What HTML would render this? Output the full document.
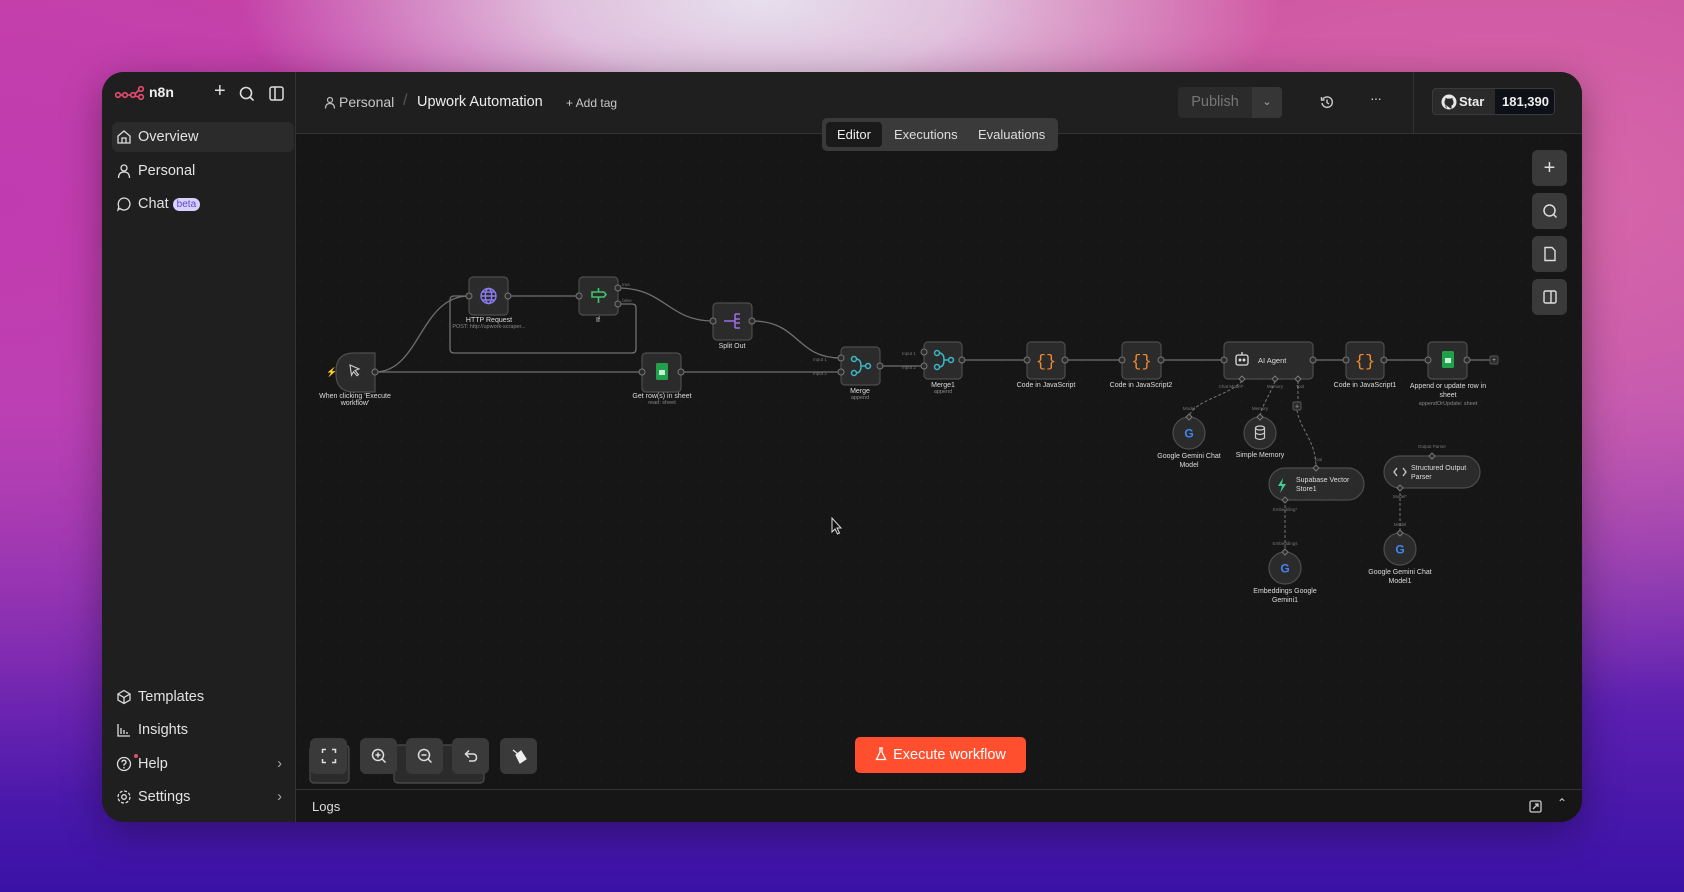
<!DOCTYPE html>
<html><head><meta charset="utf-8"><style>
*{box-sizing:border-box;margin:0;padding:0}
body{width:1684px;height:892px;overflow:hidden;font-family:"Liberation Sans",sans-serif;position:relative;
background:
radial-gradient(ellipse 520px 200px at 760px 0px,#e6e0ee 0%,rgba(230,220,235,.8) 40%,rgba(220,150,200,0) 100%),
radial-gradient(ellipse 900px 500px at 1500px 200px,#d868a8 0%,rgba(216,104,168,0) 100%),
radial-gradient(ellipse 700px 600px at 0px 200px,#c13bb0 0%,rgba(193,59,176,0) 100%),
linear-gradient(180deg,#c9489f 0%,#b24ab8 45%,#5a1fb0 80%,#3a12a6 100%);}
.win{position:absolute;left:102px;top:72px;width:1480px;height:750px;border-radius:22px;overflow:hidden;background:#161616;box-shadow:0 10px 40px rgba(0,0,0,.35)}
.abs{position:absolute}
.side{left:0;top:0;width:194px;height:750px;background:#1f1f1f;border-right:1px solid #333}
.hdr{left:194px;top:0;width:1286px;height:62px;background:#1f1f1f;border-bottom:1px solid #333}
.item{position:absolute;left:10px;height:30px;width:182px;border-radius:6px;color:#e2e2e2;font-size:14.5px;line-height:30px;padding-left:26px}
.item svg{position:absolute;left:4px;top:7px}
.t{position:absolute;color:#ddd;font-size:7px;text-align:center;white-space:nowrap;transform:translateX(-50%)}
.s{color:#888;font-size:5.5px}
.rb{position:absolute;left:1430px;width:35px;height:36px;border-radius:6px;background:#3a3a3a;display:flex;align-items:center;justify-content:center}
.cb{position:absolute;top:666px;width:37px;height:36px;border-radius:6px;background:#3a3a3a;display:flex;align-items:center;justify-content:center}
</style></head><body>
<div class="win">
<svg class="abs" style="left:-102px;top:-72px" width="1684" height="892">
<defs><pattern id="dots" width="20" height="20" patternUnits="userSpaceOnUse"><circle cx="1" cy="1" r=".6" fill="#242424"/></pattern></defs>
<rect x="296" y="134" width="1290" height="660" fill="url(#dots)"/>
<g fill="none" stroke="#707070" stroke-width="1.3">
<path d="M375,372 C420,372 420,296 469,296"/>
<path d="M375,372 H642"/>
<path d="M508,296 H579"/>
<path d="M618,288 C665,288 668,321 713,321"/>
<path d="M618,304 H632 Q636,304 636,308 V349 Q636,353 632,353 H454 Q450,353 450,349 V300 Q450,296 454,296 H469"/>
<path d="M752,321 C800,321 795,358 841,358"/>
<path d="M681,372 H841"/>
<path d="M880,366 H924"/>
<path d="M962,360 H1027 M1065,360 H1122 M1161,360 H1224 M1313,360 H1346 M1384,360 H1428 M1467,360 H1492"/>
</g>
<g fill="none" stroke="#777" stroke-width="1" stroke-dasharray="3,2">
<path d="M1242,381 C1230,395 1195,400 1189,416"/>
<path d="M1275,381 C1270,395 1262,405 1260,416"/>
<path d="M1298,381 V402 M1297,410 C1300,430 1316,440 1316,468"/>
<path d="M1285,500 V551"/>
<path d="M1400,488 V532"/>
</g>
<g fill="#2b2b2b" stroke="#4d4d4d" stroke-width="1.2">
<path d="M354,353 H375 V392 H354 Q336,392 336,374 V371 Q336,353 354,353Z"/>
<rect x="469" y="277" width="39" height="38" rx="4"/>
<rect x="579" y="277" width="39" height="38" rx="4"/>
<rect x="713" y="303" width="39" height="37" rx="4"/>
<rect x="642" y="353" width="39" height="39" rx="4"/>
<rect x="841" y="347" width="39" height="38" rx="4"/>
<rect x="924" y="342" width="38" height="37" rx="4"/>
<rect x="1027" y="342" width="38" height="37" rx="4"/>
<rect x="1122" y="342" width="39" height="37" rx="4"/>
<rect x="1224" y="342" width="89" height="37" rx="4"/>
<rect x="1346" y="342" width="38" height="37" rx="4"/>
<rect x="1428" y="342" width="39" height="37" rx="4"/>
<circle cx="1189" cy="433" r="16"/>
<circle cx="1260" cy="433" r="16"/>
<circle cx="1285" cy="568" r="16"/>
<circle cx="1400" cy="549" r="16"/>
<rect x="1269" y="468" width="95" height="32" rx="16"/>
<rect x="1384" y="456" width="96" height="32" rx="16"/>
<rect x="1293" y="402" width="8" height="8" rx="1.5"/>
<rect x="1490" y="356" width="8" height="8" rx="1.5"/>
<rect x="310" y="745" width="39" height="38" rx="4"/>
<rect x="394" y="745" width="90" height="38" rx="4"/>
</g>
<g fill="#2b2b2b" stroke="#777" stroke-width="1">
<circle cx="375" cy="372" r="3"/><circle cx="469" cy="296" r="3"/><circle cx="508" cy="296" r="3"/>
<circle cx="579" cy="296" r="3"/><circle cx="618" cy="288" r="3"/><circle cx="618" cy="304" r="3"/>
<circle cx="713" cy="321" r="3"/><circle cx="752" cy="321" r="3"/><circle cx="642" cy="372" r="3"/><circle cx="681" cy="372" r="3"/>
<circle cx="841" cy="358" r="3"/><circle cx="841" cy="372" r="3"/><circle cx="880" cy="366" r="3"/>
<circle cx="924" cy="352" r="3"/><circle cx="924" cy="366" r="3"/><circle cx="962" cy="360" r="3"/>
<circle cx="1027" cy="360" r="3"/><circle cx="1065" cy="360" r="3"/><circle cx="1122" cy="360" r="3"/><circle cx="1161" cy="360" r="3"/>
<circle cx="1224" cy="360" r="3"/><circle cx="1313" cy="360" r="3"/><circle cx="1346" cy="360" r="3"/><circle cx="1384" cy="360" r="3"/>
<circle cx="1428" cy="360" r="3"/><circle cx="1467" cy="360" r="3"/>
<path d="M1242,376 l3,3 -3,3 -3,-3z M1275,376 l3,3 -3,3 -3,-3z M1298,376 l3,3 -3,3 -3,-3z M1189,414 l3,3 -3,3 -3,-3z M1260,414 l3,3 -3,3 -3,-3z M1316,465 l3,3 -3,3 -3,-3z M1285,497 l3,3 -3,3 -3,-3z M1285,549 l3,3 -3,3 -3,-3z M1400,485 l3,3 -3,3 -3,-3z M1400,530 l3,3 -3,3 -3,-3z M1432,453 l3,3 -3,3 -3,-3z"/>
</g>
<text x="326" y="375" fill="#e04040" font-size="9" font-family="Liberation Sans">⚡</text>
<path d="M350,365 l9,4 -4,1.5 3.5,4 -1.5,1.2 -3.5,-4 -2,3.5z" fill="none" stroke="#ccc" stroke-width="1.1"/>
<g fill="none" stroke="#8b7bf0" stroke-width="1.4"><circle cx="488.5" cy="296" r="7.5"/><ellipse cx="488.5" cy="296" rx="3.2" ry="7.5"/><path d="M481,296 H496 M482.5,292 H494.5 M482.5,300 H494.5"/></g>
<g fill="none" stroke="#3fc46a" stroke-width="1.6"><path d="M592,292 H604 l2,2.5 -2,2.5 H592z M598.5,297 V303 M598.5,288 V292"/></g>
<g fill="none" stroke="#9a6fe8" stroke-width="1.5"><path d="M724,321 H729 M735,314 V328 M735,314 H740 M735,319 H740 M735,323 H740 M735,328 H740 M729,321 L735,321"/></g>
<g><rect x="656" y="363" width="12" height="17" rx="1.5" fill="#21a04b"/><rect x="659" y="370" width="6" height="5" fill="#c8f0d4"/></g>
<g fill="none" stroke="#3cb8c8" stroke-width="1.5"><circle cx="854" cy="359" r="2.5"/><circle cx="854" cy="373" r="2.5"/><circle cx="868" cy="366" r="2.5"/><path d="M856,359 Q861,359 861,366 H865.5 M856,373 Q861,373 861,366"/></g>
<g fill="none" stroke="#3cb8c8" stroke-width="1.5"><circle cx="937" cy="353" r="2.5"/><circle cx="937" cy="367" r="2.5"/><circle cx="951" cy="360" r="2.5"/><path d="M939,353 Q944,353 944,360 H948.5 M939,367 Q944,367 944,360"/></g>
<g font-family="Liberation Mono" font-size="17" fill="#f08a2c" text-anchor="middle"><text x="1046" y="366">{}</text><text x="1141.5" y="366">{}</text><text x="1365" y="366">{}</text></g>
<g fill="none" stroke="#ddd" stroke-width="1.3"><rect x="1236" y="355" width="12" height="10" rx="2"/><path d="M1242,355 V352"/><circle cx="1240" cy="360" r=".8"/><circle cx="1244" cy="360" r=".8"/></g>
<text x="1258" y="363" fill="#ddd" font-size="7.5" font-family="Liberation Sans">AI Agent</text>
<g><rect x="1442" y="351" width="12" height="17" rx="1.5" fill="#21a04b"/><rect x="1445" y="358" width="6" height="5" fill="#c8f0d4"/></g>
<text x="1494" y="362" fill="#aaa" font-size="7" text-anchor="middle">+</text>
<text x="1297" y="408.5" fill="#aaa" font-size="7" text-anchor="middle">+</text>
<g font-family="Liberation Sans" font-weight="bold" font-size="12" text-anchor="middle"><text x="1189" y="437.5" fill="#4285f4">G</text><text x="1285" y="572.5" fill="#4285f4">G</text><text x="1400" y="553.5" fill="#4285f4">G</text></g>
<g fill="none" stroke="#ccc" stroke-width="1.2"><ellipse cx="1260" cy="428" rx="4.5" ry="2"/><path d="M1255.5,428 V438 Q1260,441 1264.5,438 V428 M1255.5,433 Q1260,436 1264.5,433"/></g>
<path d="M1283,478 l-5,8 h4 l-2,7 6,-9 h-4z" fill="#3ecf8e"/>
<path d="M1397,468 l-3,4 3,4 M1403,468 l3,4 -3,4" fill="none" stroke="#ccc" stroke-width="1.3"/>
<g fill="#ddd" font-family="Liberation Sans" font-size="7"><text x="1296" y="482">Supabase Vector</text><text x="1296" y="491">Store1</text><text x="1411" y="470">Structured Output</text><text x="1411" y="479">Parser</text></g>
<g fill="#777" font-size="4.5" font-family="Liberation Sans" text-anchor="middle">
<text x="1231" y="388">Chat Model*</text><text x="1275" y="388">Memory</text><text x="1300" y="388">Tool</text>
<text x="1189" y="410">Model</text><text x="1260" y="410">Memory</text><text x="1318" y="461">Tool</text>
<text x="1285" y="511">Embedding*</text><text x="1285" y="545">Embeddings</text><text x="1432" y="448">Output Parser</text>
<text x="1400" y="498">Model*</text><text x="1400" y="526">Model</text>
<text x="820" y="361">Input 1</text><text x="820" y="375">Input 2</text><text x="909" y="355">Input 1</text><text x="909" y="369">Input 2</text>
<text x="626" y="286">true</text><text x="627" y="302">false</text>
</g>
<path d="M832,518 v14 l3,-3 2.5,5 2,-1 -2.5,-5 h4z" fill="#111" stroke="#ddd" stroke-width="1"/>
</svg>

<div style="position:absolute;left:-102px;top:-72px;width:1684px;height:892px">
<div class="t" style="left:355px;top:393px">When clicking 'Execute<br>workflow'</div>
<div class="t" style="left:489px;top:317px">HTTP Request<div class="s">POST: http://upwork-scraper...</div></div>
<div class="t" style="left:598px;top:317px">If</div>
<div class="t" style="left:732px;top:343px">Split Out</div>
<div class="t" style="left:662px;top:393px">Get row(s) in sheet<div class="s">read: sheet</div></div>
<div class="t" style="left:860px;top:388px">Merge<div class="s">append</div></div>
<div class="t" style="left:943px;top:382px">Merge1<div class="s">append</div></div>
<div class="t" style="left:1046px;top:382px">Code in JavaScript</div>
<div class="t" style="left:1141px;top:382px">Code in JavaScript2</div>
<div class="t" style="left:1365px;top:382px">Code in JavaScript1</div>
<div class="t" style="left:1448px;top:382px;line-height:9px">Append or update row in<br>sheet<div class="s">appendOrUpdate: sheet</div></div>
<div class="t" style="left:1189px;top:452px;line-height:9px">Google Gemini Chat<br>Model</div>
<div class="t" style="left:1260px;top:452px">Simple Memory</div>
<div class="t" style="left:1285px;top:587px;line-height:9px">Embeddings Google<br>Gemini1</div>
<div class="t" style="left:1400px;top:568px;line-height:9px">Google Gemini Chat<br>Model1</div>
</div>

<div class="abs side">
<svg class="abs" style="left:13px;top:14px" width="30" height="14"><g fill="none" stroke="#ea4b71" stroke-width="1.6"><circle cx="3" cy="9" r="2.3"/><circle cx="10" cy="9" r="2.3"/><circle cx="18" cy="9" r="2.3"/><circle cx="26" cy="3" r="2.3"/><circle cx="26" cy="11" r="2.3"/><path d="M5.3,9 H7.7 M12.3,9 H15.7 M20,8 L24,4 M20,10 L24,11"/></g></svg>
<div class="abs" style="left:47px;top:12px;color:#eee;font-weight:bold;font-size:14px">n8n</div>
<div class="abs" style="left:112px;top:8px;color:#ddd;font-size:20px">+</div>
<svg class="abs" style="left:137px;top:14px" width="16" height="16"><circle cx="7" cy="7" r="5.5" fill="none" stroke="#ddd" stroke-width="1.6"/><path d="M11,11 L14.5,14.5" stroke="#ddd" stroke-width="1.6"/></svg>
<svg class="abs" style="left:167px;top:14px" width="16" height="16"><rect x="1" y="1" width="13" height="13" rx="2" fill="none" stroke="#ddd" stroke-width="1.5"/><path d="M6,1 V14" stroke="#ddd" stroke-width="1.5"/></svg>
<div class="item" style="top:50px;background:#2b2b2b"><svg width="16" height="16"><path d="M2,7 L8,2 L14,7 V14 H2Z M6,14 V9 H10 V14" fill="none" stroke="#ddd" stroke-width="1.3"/></svg>Overview</div>
<div class="item" style="top:84px"><svg width="16" height="16"><circle cx="8" cy="5" r="3" fill="none" stroke="#ddd" stroke-width="1.3"/><path d="M2.5,15 Q2.5,9 8,9 Q13.5,9 13.5,15" fill="none" stroke="#ddd" stroke-width="1.3"/></svg>Personal</div>
<div class="item" style="top:117px"><svg width="16" height="16"><path d="M8,2 A6,6 0 1 1 4,12.5 L2,14 L2.8,10.5 A6,6 0 0 1 8,2Z" fill="none" stroke="#ddd" stroke-width="1.3"/></svg>Chat <span style="display:inline-block;background:#d8d0ff;color:#5b49c9;font-size:10px;line-height:13px;padding:0 4px;border-radius:7px;vertical-align:1px">beta</span></div>
<div class="item" style="top:610px"><svg width="16" height="16"><path d="M8,1.5 L14,5 V11 L8,14.5 L2,11 V5Z M2,5 L8,8.5 L14,5 M8,8.5 V14.5" fill="none" stroke="#ddd" stroke-width="1.3"/></svg>Templates</div>
<div class="item" style="top:643px"><svg width="16" height="16"><path d="M2,2 V14 H14 M5,12 V6 M8,12 V8 M11,12 V10" fill="none" stroke="#ddd" stroke-width="1.3"/></svg>Insights</div>
<div class="item" style="top:677px"><svg width="16" height="16"><circle cx="8" cy="8" r="6.5" fill="none" stroke="#ddd" stroke-width="1.3"/><path d="M6,6.3 Q6,4.3 8,4.3 Q10,4.3 10,6.3 Q10,7.6 8,8.5 V9.7" fill="none" stroke="#ddd" stroke-width="1.3"/><circle cx="8" cy="11.7" r=".8" fill="#ddd"/></svg>Help<span style="position:absolute;left:22px;top:5px;width:4px;height:4px;border-radius:2px;background:#ea4b71"></span><span style="position:absolute;right:12px;color:#aaa">›</span></div>
<div class="item" style="top:710px"><svg width="16" height="16"><circle cx="8" cy="8" r="2.3" fill="none" stroke="#ddd" stroke-width="1.3"/><circle cx="8" cy="8" r="6" fill="none" stroke="#ddd" stroke-width="1.3" stroke-dasharray="3,1.7"/></svg>Settings<span style="position:absolute;right:12px;color:#aaa">›</span></div>
</div>

<div class="abs hdr">
<svg class="abs" style="left:28px;top:24px" width="12" height="13"><circle cx="6" cy="4" r="2.5" fill="none" stroke="#bbb" stroke-width="1.2"/><path d="M1.5,12.5 Q1.5,7.5 6,7.5 Q10.5,7.5 10.5,12.5" fill="none" stroke="#bbb" stroke-width="1.2"/></svg>
<div class="abs" style="left:43px;top:22px;color:#c8c8c8;font-size:14px">Personal</div>
<div class="abs" style="left:107px;top:20px;color:#555;font-size:16px">/</div>
<div class="abs" style="left:121px;top:22px;color:#eee;font-size:14.5px">Upwork Automation</div>
<div class="abs" style="left:270px;top:24px;color:#c8c8c8;font-size:12px">+ Add tag</div>
<div class="abs" style="left:882px;top:15px;width:104px;height:31px;border-radius:4px;background:#2b2b2b;overflow:hidden"><div class="abs" style="left:0;top:0;width:74px;height:31px;color:#777;font-size:14.5px;line-height:31px;text-align:center">Publish</div><div class="abs" style="left:74px;top:0;width:30px;height:31px;background:#363636;color:#aaa;text-align:center;line-height:31px;font-size:11px">⌄</div></div>
<svg class="abs" style="left:1024px;top:23px" width="14" height="14"><path d="M3,4 A5.2,5.2 0 1 1 2,8" fill="none" stroke="#ccc" stroke-width="1.4"/><path d="M1.5,2 V5 H4.5 M7,4.5 V7.5 L9,9" fill="none" stroke="#ccc" stroke-width="1.4"/></svg>
<div class="abs" style="left:1074px;top:18px;color:#ccc;font-size:14px;letter-spacing:-1px">···</div>
<div class="abs" style="left:1117px;top:0;width:1px;height:62px;background:#333"></div>
<div class="abs" style="left:1136px;top:16px;width:123px;height:27px;border:1px solid #3a3a3a;border-radius:4px;background:#2a2a2a;overflow:hidden">
<svg class="abs" style="left:8px;top:5px" width="16" height="16"><circle cx="8" cy="8" r="7.5" fill="#e8e8e8"/><path d="M5.5,15 V12 Q4,12 3.5,10.5 M10.5,15 V11.5 Q12.5,11 12.5,8 Q12.5,6.5 11.6,5.8 Q11.8,4.5 11.4,4 Q10.5,4 9.5,4.7 Q8,4.3 6.5,4.7 Q5.5,4 4.6,4 Q4.2,4.5 4.4,5.8 Q3.5,6.5 3.5,8 Q3.5,11 5.5,11.5" fill="#2a2a2a"/></svg>
<div class="abs" style="left:26px;top:5px;color:#eee;font-weight:bold;font-size:13px">Star</div>
<div class="abs" style="left:62px;top:0;width:61px;height:27px;background:#0d1117;color:#eee;font-weight:bold;font-size:13px;line-height:26px;text-align:center">181,390</div>
</div>
</div>

<div class="abs" style="left:720px;top:46px;width:236px;height:33px;background:#3a3a3a;border-radius:5px">
<div class="abs" style="left:4px;top:4px;width:56px;height:25px;background:#1a1a1a;border-radius:4px;color:#eee;font-size:13px;line-height:25px;text-align:center">Editor</div>
<div class="abs" style="left:72px;top:4px;color:#ddd;font-size:13px;line-height:25px">Executions</div>
<div class="abs" style="left:156px;top:4px;color:#ddd;font-size:13px;line-height:25px">Evaluations</div>
</div>

<div class="rb" style="top:78px;color:#ddd;font-size:20px">+</div>
<div class="rb" style="top:121px"><svg width="16" height="16"><circle cx="7.5" cy="7.5" r="5.5" fill="none" stroke="#ddd" stroke-width="1.5"/><path d="M11.5,11.5 L14.5,14.5" stroke="#ddd" stroke-width="1.5"/></svg></div>
<div class="rb" style="top:164px"><svg width="16" height="16"><path d="M3,1.5 H10 L13,4.5 V14.5 H3Z" fill="none" stroke="#ddd" stroke-width="1.4"/></svg></div>
<div class="rb" style="top:207px"><svg width="16" height="16"><rect x="2" y="2" width="12" height="12" rx="1.5" fill="none" stroke="#ddd" stroke-width="1.4"/><path d="M9,2 V14" stroke="#ddd" stroke-width="1.4"/></svg></div>

<div class="cb" style="left:208px"><svg width="16" height="16" fill="none" stroke="#ddd" stroke-width="1.5"><path d="M1.5,5 V1.5 H5 M11,1.5 H14.5 V5 M14.5,11 V14.5 H11 M5,14.5 H1.5 V11"/></svg></div>
<div class="cb" style="left:258px"><svg width="16" height="16" fill="none" stroke="#ddd" stroke-width="1.5"><circle cx="7" cy="7" r="5.5"/><path d="M11,11 L14.5,14.5 M4.5,7 H9.5 M7,4.5 V9.5"/></svg></div>
<div class="cb" style="left:304px"><svg width="16" height="16" fill="none" stroke="#ddd" stroke-width="1.5"><circle cx="7" cy="7" r="5.5"/><path d="M11,11 L14.5,14.5 M4.5,7 H9.5"/></svg></div>
<div class="cb" style="left:350px"><svg width="16" height="16" fill="none" stroke="#ddd" stroke-width="1.5"><path d="M3,6 H10 Q13.5,6 13.5,9.5 Q13.5,13 10,13 H6 M6,2.5 L2.5,6 L6,9.5"/></svg></div>
<div class="cb" style="left:398px"><svg width="16" height="16"><path d="M2,2 L7,6 M5,7 L10,3 L15,11 L9,15Z" fill="#eee" stroke="#eee" stroke-width="1.2"/></svg></div>

<div class="abs" style="left:753px;top:665px;width:171px;height:36px;border-radius:5px;background:#ff4f2e;color:#fff;font-size:14.5px;line-height:36px;text-align:center"><svg width="12" height="14" style="vertical-align:-2px;margin-right:6px"><path d="M4,1 H8 M5,1 V5 L1.5,12.5 H10.5 L7,5 V1" fill="none" stroke="#fff" stroke-width="1.3"/></svg>Execute workflow</div>

<div class="abs" style="left:194px;top:717px;width:1286px;height:33px;background:#161616;border-top:1px solid #333">
<div class="abs" style="left:16px;top:9px;color:#ddd;font-size:13px">Logs</div>
<svg class="abs" style="left:1233px;top:10px" width="13" height="13"><rect x="1" y="1" width="11" height="11" rx="1.5" fill="none" stroke="#ccc" stroke-width="1.3"/><path d="M4,9 L9,4 M6,4 H9 V7" fill="none" stroke="#ccc" stroke-width="1.3"/></svg>
<div class="abs" style="left:1261px;top:6px;color:#ccc;font-size:12px">⌃</div>
</div>
</div>
</body></html>
